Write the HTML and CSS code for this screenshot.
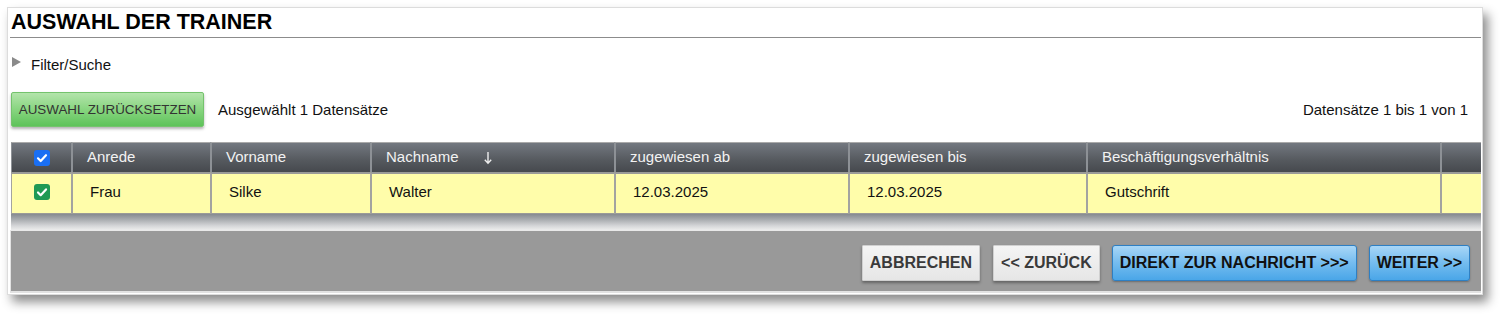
FILE: index.html
```html
<!DOCTYPE html>
<html lang="de">
<head>
<meta charset="utf-8">
<title>Auswahl der Trainer</title>
<link rel="stylesheet" href="styles.css">
</head>
<body>
<div class="window">
  <h1 class="title">AUSWAHL DER TRAINER</h1>
  <div class="filter"><span class="tri"></span><span>Filter/Suche</span></div>
  <div class="toolbar">
    <div class="toolbar-left">
      <button class="btn-green">AUSWAHL ZURÜCKSETZEN</button>
      <span class="selected">Ausgewählt 1 Datensätze</span>
    </div>
    <span class="count">Datensätze 1 bis 1 von 1</span>
  </div>
  <table class="grid">
    <colgroup>
      <col class="c0"><col class="c1"><col class="c2"><col class="c3"><col class="c4"><col class="c5"><col class="c6"><col class="c7">
    </colgroup>
    <thead>
      <tr>
        <th class="chk"><span class="cb cb-blue"><svg viewBox="0 0 16 16" width="16" height="16"><path d="M4 8.3l2.7 2.7L12 5.2" fill="none" stroke="#fff" stroke-width="2.2" stroke-linecap="round" stroke-linejoin="round"/></svg></span></th>
        <th>Anrede</th>
        <th>Vorname</th>
        <th><span class="sorthead">Nachname<svg class="sort" viewBox="0 0 10 16" width="10" height="16"><path d="M5 2v11M1.8 9.8L5 13.3l3.2-3.5" fill="none" stroke="#eee" stroke-width="1.4"/></svg></span></th>
        <th>zugewiesen ab</th>
        <th>zugewiesen bis</th>
        <th>Beschäftigungsverhältnis</th>
        <th></th>
      </tr>
    </thead>
    <tbody>
      <tr>
        <td class="chk"><span class="cb cb-green"><svg viewBox="0 0 16 16" width="16" height="16"><path d="M4 8.5l2.7 2.7L12 5.4" fill="none" stroke="#fff" stroke-width="2.2" stroke-linecap="round" stroke-linejoin="round"/></svg></span></td>
        <td>Frau</td>
        <td>Silke</td>
        <td>Walter</td>
        <td>12.03.2025</td>
        <td>12.03.2025</td>
        <td>Gutschrift</td>
        <td></td>
      </tr>
    </tbody>
  </table>
  <div class="tableshade"></div>
  <div class="footer">
    <button class="btn-gray">ABBRECHEN</button>
    <button class="btn-gray">&lt;&lt; ZURÜCK</button>
    <button class="btn-blue">DIREKT ZUR NACHRICHT &gt;&gt;&gt;</button>
    <button class="btn-blue">WEITER &gt;&gt;</button>
  </div>
</div>
</body>
</html>
```

FILE: styles.css
```css
* { box-sizing: border-box; }
html, body { margin: 0; padding: 0; background: #fff; }
body {
  font-family: "Liberation Sans", Arial, sans-serif;
  color: #111;
  padding: 7px 0 20px 7px;
  min-height: 317px;
}
.window {
  width: 1476px;
  border: 1px solid #dcdcdc;
  padding: 0 1px 1px 2px;
  background: #fff;
  box-shadow: 5px 7px 10px rgba(0,0,0,0.45);
}
.title {
  margin: 0;
  font-size: 21.5px;
  font-weight: bold;
  line-height: 29px;
  height: 30px;
  padding-left: 1px;
  border-bottom: 1px solid #8c8c8c;
  color: #000;
}
.filter {
  display: flex;
  align-items: center;
  height: 18px;
  margin-top: 17px;
  font-size: 15px;
  color: #111;
}
.tri {
  width: 0; height: 0;
  margin: 0 10px 0 2px;
  border-left: 9px solid #8a8a8a;
  border-top: 5px solid transparent;
  border-bottom: 5px solid transparent;
  position: relative; top: -2px;
}
.toolbar {
  display: flex;
  align-items: center;
  justify-content: space-between;
  margin-top: 19px;
  padding-left: 1px;
  padding-right: 13px;
  font-size: 15px;
}
.toolbar-left { display: flex; align-items: center; gap: 14px; }
.btn-green {
  height: 35px;
  width: 193px;
  padding: 0;
  font-family: "Liberation Sans", Arial, sans-serif;
  font-size: 13.4px;
  color: #333;
  border: 1px solid #74c36d;
  border-radius: 2px;
  background: linear-gradient(#b3e4ab, #88d580 50%, #5ec35a);
  box-shadow: 0 2px 3px rgba(0,0,0,0.3);
}
.grid {
  margin-top: 15px;
  margin-left: 1px;
  width: 1470px;
  border-collapse: separate;
  border-spacing: 0;
  table-layout: fixed;
  font-size: 15px;
}
.c0 { width: 60px; } .c1 { width: 139px; } .c2 { width: 160px; } .c3 { width: 244px; }
.c4 { width: 234px; } .c5 { width: 238px; } .c6 { width: 354px; } .c7 { width: 41px; }
.grid th {
  height: 30px;
  padding: 0 0 3px 14px;
  text-align: left;
  font-weight: normal;
  color: #f2f2f2;
  background: linear-gradient(#737880, #55595e 60%, #46494e);
  border-left: 2px solid #8d9196;
  border-top: 1px solid #aaa;
  white-space: nowrap;
}
.grid th:first-child { border-left: 1px solid #8d9196; }
.grid td {
  height: 42px;
  padding: 0 0 4px 17px;
  background: #fffdaa;
  border-left: 2px solid #a3a3a0;
  border-top: 2px solid #9a9a98;
  border-bottom: 1px solid #9a9a98;
  color: #111;
}
.grid td:first-child { border-left: 1px solid #a3a3a0; }
.grid .chk { padding: 0; text-align: center; }
.cb {
  display: inline-flex;
  width: 16px; height: 16px;
  border-radius: 3px;
  vertical-align: middle;
}
.cb-blue { background: #1a6ff3; }
.cb-green { background: #1f9a55; }
.grid th .cb { position: relative; top: -1px; }
.grid td .cb { position: relative; top: -3px; }
.sorthead { display: inline-flex; align-items: center; }
.sort { margin-left: 24px; position: relative; top: 2px; }
.tableshade {
  height: 16px;
  margin-left: 1px;
  background: linear-gradient(#868a90, #a9acb0 35%, #d6d7d9 75%, #ececec);
}
.footer {
  height: 63px;
  background: #999;
  border-left: 1px solid #e2e2e2;
  border-top: 1px solid #e8e8e8;
  border-bottom: 2px solid #e2e2e2;
  display: flex;
  align-items: center;
  justify-content: flex-end;
  gap: 12px;
  padding: 3px 11px 0 0;
}
.footer button {
  height: 36px;
  padding: 0 7px;
  font-family: "Liberation Sans", Arial, sans-serif;
  font-size: 16px;
  font-weight: bold;
  white-space: nowrap;
}
.btn-gray {
  color: #3a3a3a;
  background: linear-gradient(#f4f4f4, #e6e6e6);
  border: 1px solid #d0d0d0;
  border-radius: 1px;
  box-shadow: 0 2px 3px rgba(0,0,0,0.35);
}
.btn-gray:first-child { margin-right: 1px; }
.btn-blue {
  color: #111;
  background: linear-gradient(#a8d6f7, #74bcef 50%, #4aa6e8);
  border: 1px solid #2e7fc3;
  border-radius: 3px;
  box-shadow: 0 1px 2px rgba(0,0,0,0.3);
}
```
